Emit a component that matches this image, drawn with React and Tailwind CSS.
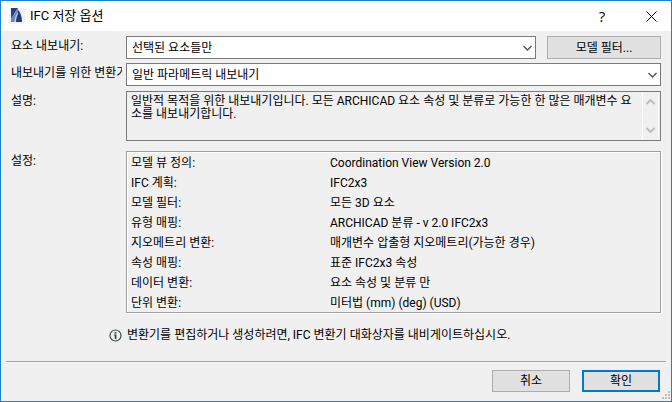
import { useState } from 'react';

const settings = [
  { label: '모델 뷰 정의:', value: 'Coordination View Version 2.0' },
  { label: 'IFC 계획:', value: 'IFC2x3' },
  { label: '모델 필터:', value: '모든 3D 요소' },
  { label: '유형 매핑:', value: 'ARCHICAD 분류 - v 2.0 IFC2x3' },
  { label: '지오메트리 변환:', value: '매개변수 압출형 지오메트리(가능한 경우)' },
  { label: '속성 매핑:', value: '표준 IFC2x3 속성' },
  { label: '데이터 변환:', value: '요소 속성 및 분류 만' },
  { label: '단위 변환:', value: '미터법 (mm) (deg) (USD)' },
];

function AppLogo() {
  return (
    <svg className="h-4 w-4" viewBox="0 0 16 16" aria-hidden="true">
      <rect width="16" height="16" fill="#f1f1f7" />
      <path d="M2 0h7L2 11z" fill="#263f7c" />
      <path d="M9 0 2 11v3h4C6 9 7 5 9 3z" fill="#a9b7dc" />
      <path d="M2 11 8 2h1L5 14H2z" fill="#6d83bd" />
      <path d="M8 1c3 2 5 7 5 13H7C7 9 7 6 9 3z" fill="#243b78" />
      <path d="M6 14C6 9 7 6 9 4v2c-1 2-2 4-2 8z" fill="#c5cee6" />
    </svg>
  );
}

function Chevron({ up = false, className = '' }) {
  return (
    <svg className={className} viewBox="0 0 9 6" fill="none" stroke="currentColor" aria-hidden="true">
      <path d={up ? 'M0.5 5 4.5 1 8.5 5' : 'M0.5 1 4.5 5 8.5 1'} />
    </svg>
  );
}

function ComboBox({ id, value, onChange, options }) {
  return (
    <div className="relative min-w-0 flex-1">
      <select
        id={id}
        value={value}
        onChange={(e) => onChange(e.target.value)}
        className="block h-[23px] w-full appearance-none border border-[#7a7a7a] bg-white pr-5 pl-[5px] leading-4 text-black outline-none"
      >
        {options.map((option) => (
          <option key={option}>{option}</option>
        ))}
      </select>
      <Chevron className="pointer-events-none absolute top-[9px] right-1 h-[6px] w-[9px] stroke-[1.3] text-[#505050]" />
    </div>
  );
}

export default function App() {
  const [exportScope, setExportScope] = useState('선택된 요소들만');
  const [translator, setTranslator] = useState('일반 파라메트릭 내보내기');

  return (
    <div className="flex min-h-screen flex-col border border-[#1883d7] bg-[#f0f0f0] font-['Roboto','Noto_Sans_CJK_KR',sans-serif] text-[12px] leading-4 text-black">
      <header className="flex h-[30px] shrink-0 items-center bg-white pr-3 pl-2">
        <AppLogo />
        <h1 className="ml-[5px] flex-1 text-[13px]">IFC 저장 옵션</h1>
        <button type="button" aria-label="도움말" className="mr-[33px] w-4 font-['Open_Sans',sans-serif] text-[15px] font-medium">
          ?
        </button>
        <button type="button" aria-label="닫기" className="flex w-4 justify-center">
          <svg className="h-[11px] w-[11px]" viewBox="0 0 11 11" stroke="#000000" aria-hidden="true">
            <path d="M0.5 0.5l10 10M10.5 0.5l-10 10" />
          </svg>
        </button>
      </header>

      <main className="flex flex-1 flex-col px-[10px] pt-[5px]">
        <div className="flex">
          <label htmlFor="scope" className="w-[115px] shrink-0 pt-[2px]">요소 내보내기:</label>
          <ComboBox
            id="scope"
            value={exportScope}
            onChange={setExportScope}
            options={['선택된 요소들만', '모든 요소']}
          />
          <button type="button" className="ml-[11px] h-[23px] w-[114px] border border-[#adadad] bg-[#e1e1e1]">
            모델 필터...
          </button>
        </div>

        <div className="mt-1 flex">
          <label htmlFor="translator" className="mr-1 w-[111px] shrink-0 overflow-hidden pt-[2px] whitespace-nowrap">
            내보내기를 위한 변환기:
          </label>
          <ComboBox
            id="translator"
            value={translator}
            onChange={setTranslator}
            options={['일반 파라메트릭 내보내기']}
          />
        </div>

        <div className="mt-[5px] flex">
          <label htmlFor="description" className="w-[115px] shrink-0 pt-[2px]">설명:</label>
          <div className="flex h-[50px] min-w-0 flex-1 border border-[#7a7a7a] p-px">
            <textarea
              id="description"
              readOnly
              className="min-w-0 flex-1 resize-none overflow-hidden pt-[2px] pr-1 pl-[3px] leading-[13px] outline-none"
              value="일반적 목적을 위한 내보내기입니다. 모든 ARCHICAD 요소 속성 및 분류로 가능한 한 많은 매개변수 요소를 내보내기합니다."
            />
            <div className="flex w-[17px] flex-col items-center justify-between border-x border-white py-[6px] text-[#bfbfbf]">
              <Chevron up className="h-[6px] w-[9px] stroke-2" />
              <Chevron className="h-[6px] w-[9px] stroke-2" />
            </div>
          </div>
        </div>

        <section className="mt-[10px] flex">
          <h2 className="w-[115px] shrink-0 pt-[2px]">설정:</h2>
          <div className="flex-1 border border-[#a0a0a0] shadow-[1px_1px_0_#ffffff,inset_1px_1px_0_#ffffff]">
            <table className="w-full table-fixed text-left">
              <tbody>
                {settings.map((row) => (
                  <tr key={row.label} className="h-5">
                    <th scope="row" className="w-[203px] pt-[2px] pl-1 font-normal">{row.label}</th>
                    <td className="pt-[2px]">{row.value}</td>
                  </tr>
                ))}
              </tbody>
            </table>
          </div>
        </section>

        <p className="mt-[14px] ml-[98px] flex items-center">
          <svg className="mr-[5px] h-[13px] w-[13px]" viewBox="0 0 13 13" aria-hidden="true">
            <circle cx="6.5" cy="6.5" r="5.5" fill="none" stroke="#3c4a4a" strokeWidth="1.2" />
            <path d="M5.6 3h1.8v1.6H5.6zM5 5.5h2.4V10H5.8V6.4H5z" fill="#2b3838" />
          </svg>
          변환기를 편집하거나 생성하려면, IFC 변환기 대화상자를 내비게이트하십시오.
        </p>
      </main>

      <footer className="relative mx-[5px] flex justify-end gap-3 border-t border-[#a0a0a0] pt-2 pr-[6px] pb-[9px] shadow-[inset_0_1px_0_#f7f7f7]">
        <button type="button" className="h-[22px] w-[78px] border border-[#adadad] bg-[#e1e1e1] pb-px">취소</button>
        <button type="button" className="flex h-[22px] w-[78px] items-center justify-center border-2 border-[#0078d7] bg-[#e1e1e1] pb-px">
          확인
        </button>
        <svg className="absolute -right-1 bottom-[2px] h-2 w-2" viewBox="0 0 8 8" fill="#bfbfbf" aria-hidden="true">
          <path d="M6 0h2v2H6zM3 3h2v2H3zM6 3h2v2H6zM0 6h2v2H0zM3 6h2v2H3zM6 6h2v2H6z" />
        </svg>
      </footer>
    </div>
  );
}
